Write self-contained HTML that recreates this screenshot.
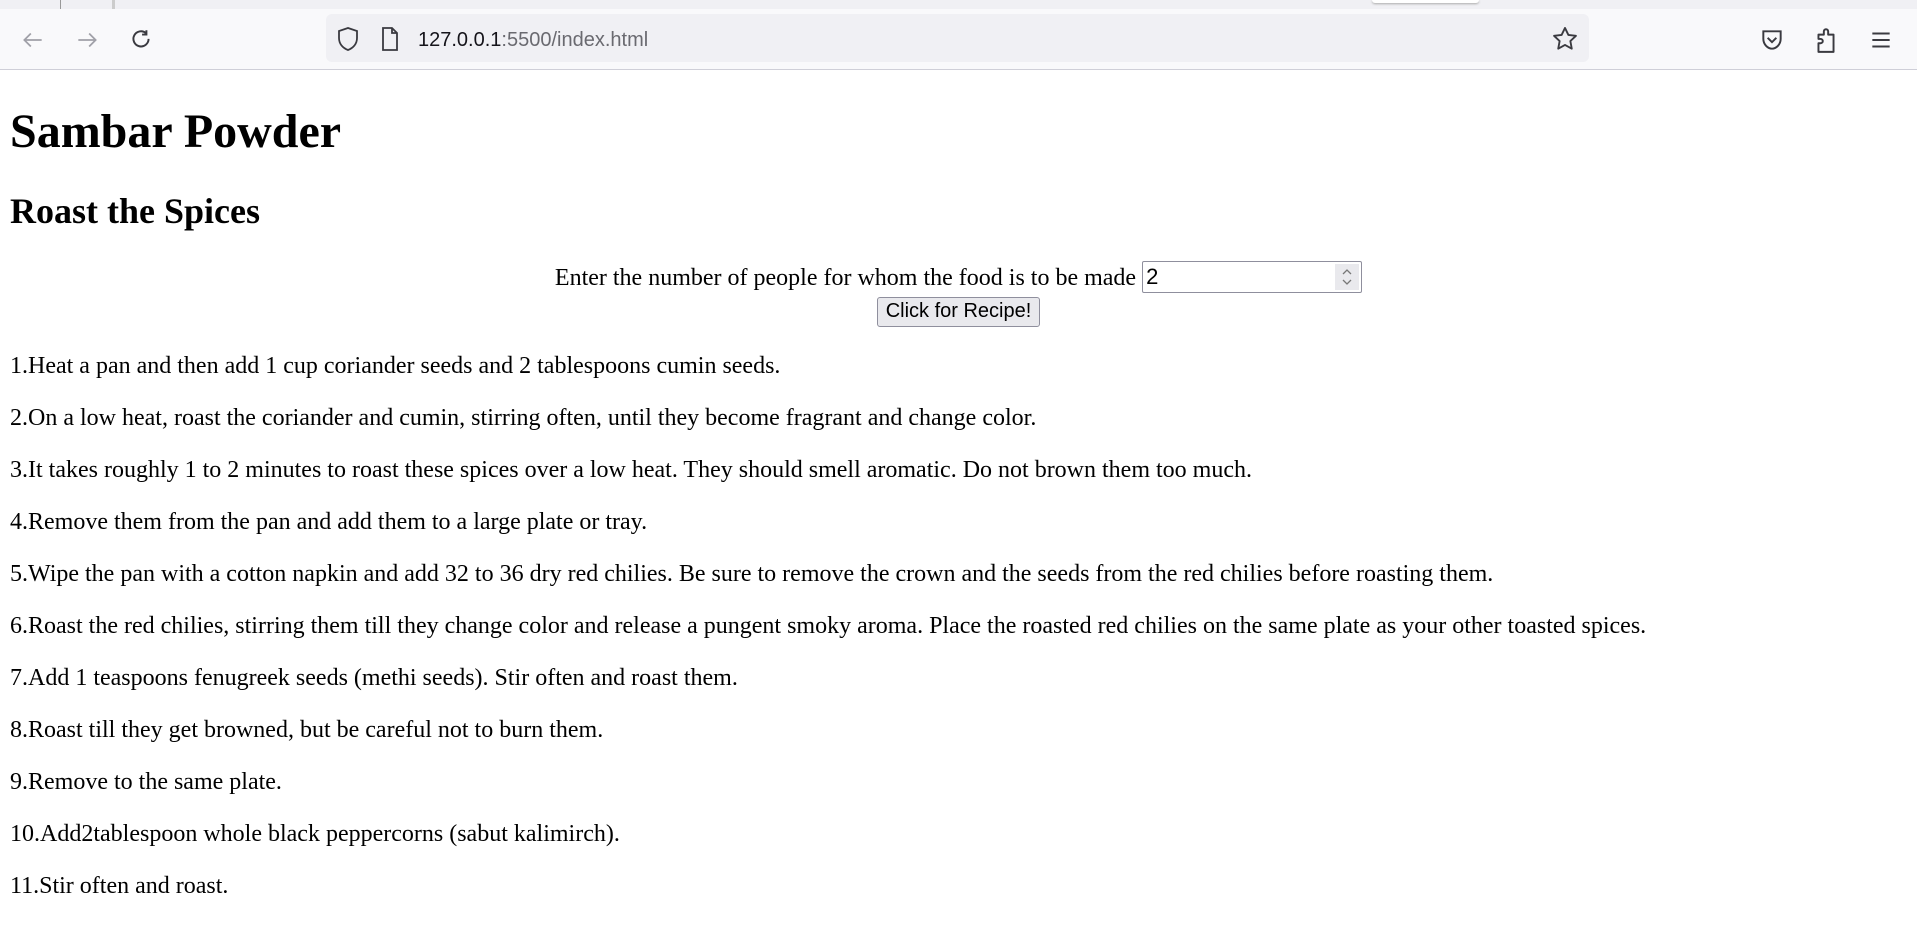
<!DOCTYPE html>
<html><head><meta charset="utf-8"><style>
html,body{margin:0;padding:0;background:#fff;}
body{width:1917px;height:945px;overflow:hidden;font-family:"Liberation Serif",serif;}
.tabs{height:9px;background:#f0f0f4;position:relative;}
.tabs .a{position:absolute;left:60px;top:0;width:1px;height:9px;background:#999;}
.tabs .b{position:absolute;left:112px;top:0;width:3px;height:9px;background:#ccc;}
.tabs .c{position:absolute;left:1372px;top:0;width:107px;height:3px;background:#fff;border-radius:0 0 4px 4px;box-shadow:0 1px 2px #aaa;}
.bar{height:60px;background:#f9f9fb;border-bottom:1px solid #cfcfd8;position:relative;}
.url{position:absolute;left:326px;top:5px;width:1263px;height:48px;background:#f0f0f4;border-radius:6px;}
.urltext{position:absolute;left:418px;top:20px;font:20px "Liberation Sans",sans-serif;color:#15141a;}
.urltext span{color:#6a6a70;}
svg.i{position:absolute;}
.content{padding:2px 10px 0;}
h1{font-size:48px;margin:32px 0;line-height:55px;}
h2{font-size:36px;margin:30px 0 31px;line-height:41px;}
.form{text-align:center;font-size:24px;line-height:30px;margin-bottom:25px;}
.inp{display:inline-block;position:relative;vertical-align:middle;top:-2px;}
input{width:212px;height:30px;font:22px "Liberation Sans",sans-serif;border:1px solid #8f8f9d;border-radius:2px;padding:0 3px;box-sizing:content-box;}
.spin{position:absolute;right:3px;top:3px;width:24px;height:26px;background:#e9e9ed;}
button{font:20px "Liberation Sans",sans-serif;height:30px;padding:0 8px;background:#e9e9ed;border:1px solid #8f8f9d;border-radius:3px;margin-top:0;}
p{font-size:24px;margin:24px 0;line-height:28px;}
</style></head><body>
<div class="tabs"><div class="a"></div><div class="b"></div><div class="c"></div></div>
<div class="bar">
<svg class="i" style="left:20px;top:18px" width="26" height="26" viewBox="0 0 24 24" fill="none" stroke="#a0a0a8" stroke-width="1.6"><path d="M20 12H4M10 6l-6 6 6 6"/></svg>
<svg class="i" style="left:74px;top:18px" width="26" height="26" viewBox="0 0 24 24" fill="none" stroke="#a0a0a8" stroke-width="1.6"><path d="M4 12h16M14 6l6 6-6 6"/></svg>
<svg class="i" style="left:128px;top:18px" width="26" height="26" viewBox="0 0 24 24" fill="none" stroke="#3a3a40" stroke-width="1.8"><path d="M19 11a7 7 0 1 1-2.5-5.4"/><path d="M17 3v4h-4"/></svg>
<div class="url"></div>
<svg class="i" style="left:336px;top:17px" width="24" height="26" viewBox="0 0 24 26" fill="none" stroke="#3a3a40" stroke-width="1.8"><path d="M12 2L3 5v7c0 6 4 10 9 12 5-2 9-6 9-12V5z"/></svg>
<svg class="i" style="left:380px;top:17px" width="20" height="26" viewBox="0 0 20 26" fill="none" stroke="#3a3a40" stroke-width="1.8"><path d="M3 2h9l5 5v17H3z"/><path d="M12 2v5h5"/></svg>
<div class="urltext">127.0.0.1<span>:5500/index.html</span></div>
<svg class="i" style="left:1551px;top:16px" width="28" height="28" viewBox="0 0 24 24" fill="none" stroke="#3a3a40" stroke-width="1.6" stroke-linejoin="round"><path d="M12 2.5l2.9 6 6.5.8-4.8 4.5 1.2 6.5L12 17.1 6.2 20.3l1.2-6.5L2.6 9.3l6.5-.8z"/></svg>
<svg class="i" style="left:1759px;top:18px" width="26" height="26" viewBox="0 0 24 24" fill="none" stroke="#3a3a40" stroke-width="1.8"><path d="M4 4h16v7c0 5-4 9-8 9s-8-4-8-9z"/><path d="M8 10l4 4 4-4"/></svg>
<svg class="i" style="left:1813px;top:17px" width="26" height="28" viewBox="0 0 24 26" fill="none" stroke="#3a3a40" stroke-width="1.8" stroke-linejoin="round"><path d="M5 24V16h2a2 2 0 0 0 0-4H5V8h5V5a2 2 0 0 1 4 0v3h5v16z"/></svg>
<svg class="i" style="left:1868px;top:18px" width="26" height="26" viewBox="0 0 24 24" fill="none" stroke="#3a3a40" stroke-width="1.8"><path d="M4 6h16M4 12h16M4 18h16"/></svg>
</div>
<div class="content">
<h1>Sambar Powder</h1>
<h2>Roast the Spices</h2>
<div class="form">Enter the number of people for whom the food is to be made <span class="inp"><input type="text" value="2"><span class="spin"><svg width="24" height="26" viewBox="0 0 24 26" fill="none" stroke="#777" stroke-width="1.3"><path d="M8 10l4-4 4 4M8 16l4 4 4-4"/></svg></span></span><br><button>Click for Recipe!</button></div>
<p>1.Heat a pan and then add 1 cup coriander seeds and 2 tablespoons cumin seeds.</p>
<p>2.On a low heat, roast the coriander and cumin, stirring often, until they become fragrant and change color.</p>
<p>3.It takes roughly 1 to 2 minutes to roast these spices over a low heat. They should smell aromatic. Do not brown them too much.</p>
<p>4.Remove them from the pan and add them to a large plate or tray.</p>
<p>5.Wipe the pan with a cotton napkin and add 32 to 36 dry red chilies. Be sure to remove the crown and the seeds from the red chilies before roasting them.</p>
<p>6.Roast the red chilies, stirring them till they change color and release a pungent smoky aroma. Place the roasted red chilies on the same plate as your other toasted spices.</p>
<p>7.Add 1 teaspoons fenugreek seeds (methi seeds). Stir often and roast them.</p>
<p>8.Roast till they get browned, but be careful not to burn them.</p>
<p>9.Remove to the same plate.</p>
<p>10.Add2tablespoon whole black peppercorns (sabut kalimirch).</p>
<p>11.Stir often and roast.</p>
</div>
</body></html>
